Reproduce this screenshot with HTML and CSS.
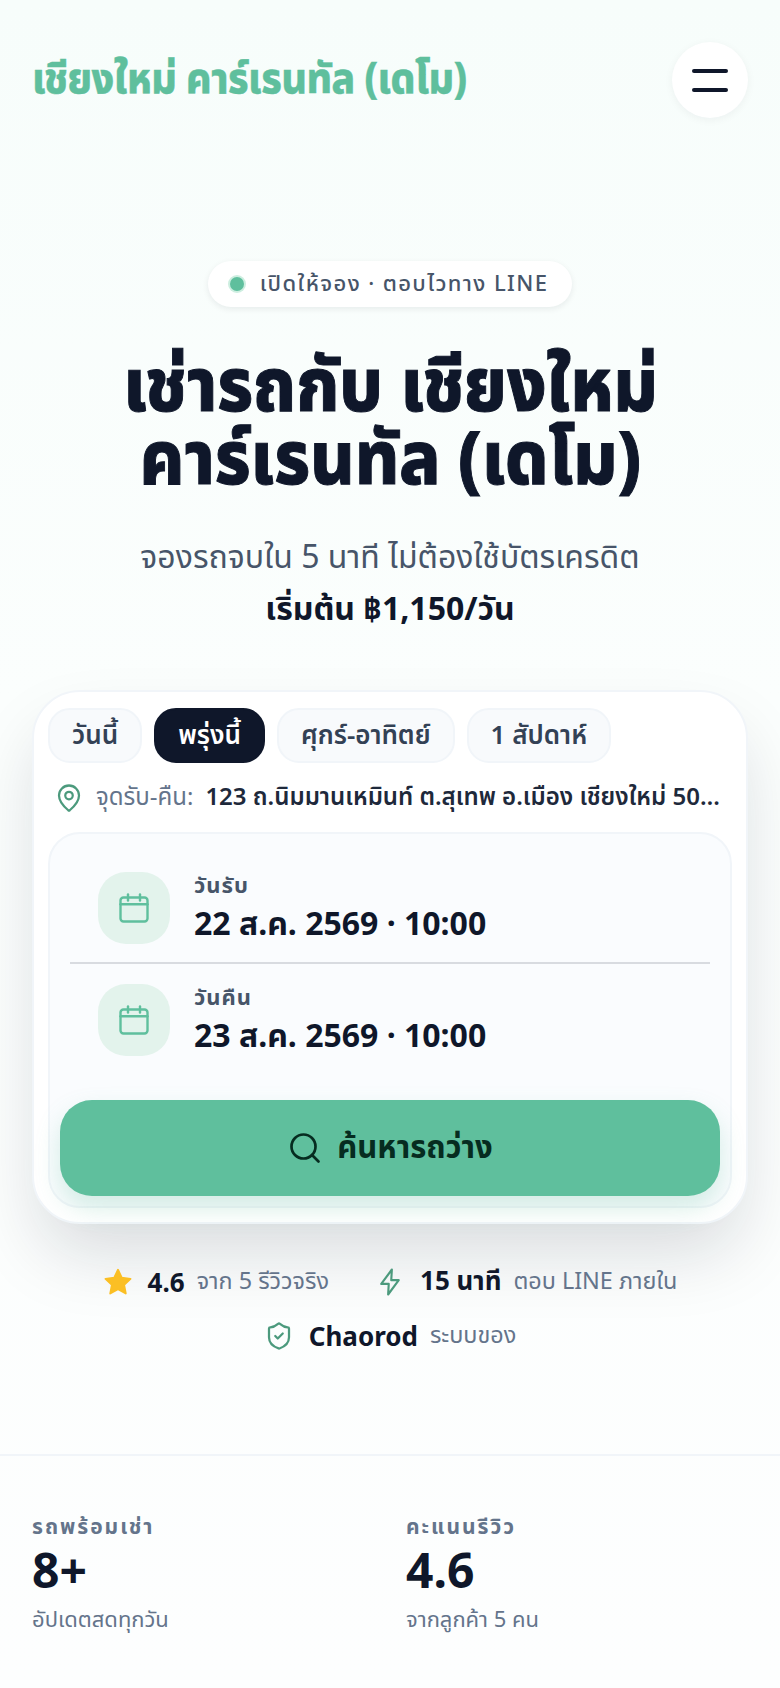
FILE: index.html
```html
<!DOCTYPE html>
<html lang="th">
<head>
<meta charset="utf-8">
<title>เชียงใหม่ คาร์เรนทัล (เดโม)</title>
<link rel="stylesheet" href="styles.css">
</head>
<body>
<header class="topbar">
  <a class="brand">เชียงใหม่ คาร์เรนทัล (เดโม)</a>
  <button class="menu-btn" aria-label="เมนู">
    <span class="menu-line"></span>
    <span class="menu-line"></span>
  </button>
</header>

<main>
  <section class="hero">
    <div class="badge"><span class="badge-dot"></span>เปิดให้จอง · ตอบไวทาง LINE</div>
    <h1 class="hero-title">เช่ารถกับ เชียงใหม่<br>คาร์เรนทัล (เดโม)</h1>
    <p class="hero-sub">จองรถจบใน 5 นาที ไม่ต้องใช้บัตรเครดิต</p>
    <p class="hero-price">เริ่มต้น ฿1,150/วัน</p>
  </section>

  <section class="booking">
    <div class="chips">
      <button class="chip">วันนี้</button>
      <button class="chip chip-active">พรุ่งนี้</button>
      <button class="chip">ศุกร์-อาทิตย์</button>
      <button class="chip">1 สัปดาห์</button>
    </div>
    <div class="place">
      <svg class="place-icon" viewBox="0 0 24 24" fill="none" stroke="currentColor" stroke-width="1.800" stroke-linecap="round" stroke-linejoin="round"><path d="M20 10c0 5-5.500 10.200-7.400 11.800a1 1 0 0 1-1.200 0C9.500 20.200 4 15 4 10a8 8 0 0 1 16 0"/><circle cx="12" cy="10" r="3"/></svg>
      <span class="place-label">จุดรับ-คืน:</span>
      <span class="place-value">123 ถ.นิมมานเหมินท์ ต.สุเทพ อ.เมือง เชียงใหม่ 50200</span>
    </div>
    <div class="panel">
      <div class="date-row date-row-first">
        <span class="date-tile">
          <svg viewBox="0 0 24 24" fill="none" stroke="currentColor" stroke-width="1.600" stroke-linecap="round" stroke-linejoin="round"><path d="M8 3v4"/><path d="M16 3v4"/><rect x="3" y="5" width="18" height="16" rx="2"/><path d="M3 9.500h18"/></svg>
        </span>
        <span class="date-text">
          <span class="date-label">วันรับ</span>
          <span class="date-value">22 ส.ค. 2569 · 10:00</span>
        </span>
      </div>
      <div class="date-row">
        <span class="date-tile">
          <svg viewBox="0 0 24 24" fill="none" stroke="currentColor" stroke-width="1.600" stroke-linecap="round" stroke-linejoin="round"><path d="M8 3v4"/><path d="M16 3v4"/><rect x="3" y="5" width="18" height="16" rx="2"/><path d="M3 9.500h18"/></svg>
        </span>
        <span class="date-text">
          <span class="date-label">วันคืน</span>
          <span class="date-value">23 ส.ค. 2569 · 10:00</span>
        </span>
      </div>
      <button class="search-btn">
        <svg viewBox="0 0 24 24" fill="none" stroke="currentColor" stroke-width="1.800" stroke-linecap="round" stroke-linejoin="round"><path d="m21 21-4.300-4.300"/><circle cx="11" cy="11" r="8"/></svg>
        ค้นหารถว่าง
      </button>
    </div>
  </section>

  <section class="trust">
    <div class="trust-item">
      <svg class="trust-icon star" viewBox="0 0 24 24"><path d="M12 2.200l3 6.400 7 .9-5.100 4.800 1.300 6.900-6.200-3.400-6.200 3.400 1.300-6.900L2 9.500l7-.9z" fill="currentColor" stroke="currentColor" stroke-width="1.500" stroke-linejoin="round"/></svg>
      <b>4.6</b><span>จาก 5 รีวิวจริง</span>
    </div>
    <div class="trust-item">
      <svg class="trust-icon" viewBox="0 0 24 24" fill="none" stroke="currentColor" stroke-width="1.700" stroke-linecap="round" stroke-linejoin="round"><path d="M13.500 2 5 13.500h6L10.500 22 19 10.500h-6z"/></svg>
      <b>15 นาที</b><span>ตอบ LINE ภายใน</span>
    </div>
    <div class="trust-item">
      <svg class="trust-icon" viewBox="0 0 24 24" fill="none" stroke="currentColor" stroke-width="1.800" stroke-linecap="round" stroke-linejoin="round"><path d="M20 13c0 5-3.500 7.500-7.660 8.950a1 1 0 0 1-.670-.010C7.500 20.500 4 18 4 13V6a1 1 0 0 1 1-1c2 0 4.500-1.200 6.240-2.720a1.170 1.170 0 0 1 1.520 0C14.510 3.810 17 5 19 5a1 1 0 0 1 1 1z"/><path d="m9 12 2 2 4-4"/></svg>
      <b>Chaorod</b><span>ระบบของ</span>
    </div>
  </section>

  <section class="stats">
    <div class="stat">
      <div class="stat-label">รถพร้อมเช่า</div>
      <div class="stat-value">8+</div>
      <div class="stat-note">อัปเดตสดทุกวัน</div>
    </div>
    <div class="stat">
      <div class="stat-label">คะแนนรีวิว</div>
      <div class="stat-value">4.6</div>
      <div class="stat-note">จากลูกค้า 5 คน</div>
    </div>
  </section>
</main>
</body>
</html>
```
FILE: styles.css
```css
* { box-sizing: border-box; }

html, body { margin: 0; padding: 0; }

html { background: #fdfefe; }

body {
  min-height: 100vh;
  background: linear-gradient(#f7fdfb, #fbfefd 700px, #fdfefe);
  color: #0f172a;
  font-family: "Noto Sans", "Noto Sans Thai", sans-serif;
  overflow-x: hidden;
}

button { font-family: inherit; border: 0; }

.topbar {
  display: flex;
  align-items: center;
  justify-content: space-between;
  padding: 42px 32px 0;
}

.brand {
  color: #5fbf9d;
  font-size: 42px;
  font-weight: 800;
  line-height: 70px;
  letter-spacing: -.5px;
  margin-bottom: 6px;
  transform: scaleX(.93);
  transform-origin: left center;
  -webkit-text-stroke: .4px #5fbf9d;
}

.menu-btn {
  width: 76px;
  height: 76px;
  border-radius: 50%;
  background: #fff;
  box-shadow: 0 2px 8px rgba(15, 23, 42, .05);
  display: flex;
  flex-direction: column;
  align-items: center;
  justify-content: center;
  gap: 15px;
  padding: 0;
}

.menu-line {
  display: block;
  width: 36px;
  height: 4px;
  border-radius: 2px;
  background: #0f172a;
}

.hero {
  display: flex;
  flex-direction: column;
  align-items: center;
  text-align: center;
  padding: 143px 32px 0;
}

.badge {
  display: flex;
  align-items: center;
  gap: 16px;
  height: 46px;
  padding: 0 24px 0 22px;
  border-radius: 23px;
  background: #fff;
  box-shadow: 0 2px 6px rgba(15, 23, 42, .08);
  color: #475569;
  font-size: 22px;
  font-weight: 500;
  letter-spacing: 1.400px;
}

.badge-dot {
  width: 14px;
  height: 14px;
  border-radius: 50%;
  background: #5fbf9d;
  box-shadow: 0 0 0 2px #cdeee0;
}

.hero-title {
  margin: 39px 0 0;
  font-size: 74px;
  font-weight: 800;
  line-height: 73px;
  white-space: nowrap;
  transform: scaleX(.92);
  -webkit-text-stroke: 1px #0f172a;
}

.hero-sub {
  margin: 42px 0 0;
  color: #475569;
  font-size: 32px;
  line-height: 44px;
}

.hero-price {
  margin: 8px 0 0;
  font-size: 32px;
  font-weight: 700;
  line-height: 44px;
}

.booking {
  margin: 60px 32px 0;
  padding: 16px 14px;
  height: 534px;
  border: 2px solid #f1f5f9;
  border-radius: 48px;
  background: #fff;
  box-shadow: 0 36px 70px -8px rgba(15, 23, 42, .15);
}

.chips {
  display: flex;
  gap: 12px;
}

.chip {
  height: 55px;
  padding: 0 22px;
  border-radius: 22px;
  border: 2px solid #f1f5f9;
  background: #f8fafc;
  color: #334155;
  font-size: 26px;
  font-weight: 600;
}

.chip-active {
  background: #0f172a;
  border-color: #0f172a;
  color: #fff;
}

.place {
  display: flex;
  align-items: center;
  gap: 12px;
  height: 69px;
  padding: 0 10px 0 6px;
  font-size: 24px;
}

.place-icon {
  flex: none;
  width: 30px;
  height: 30px;
  color: #4c9a7d;
}

.place-label {
  flex: none;
  color: #64748b;
}

.place-value {
  flex: 1;
  min-width: 0;
  overflow: hidden;
  white-space: nowrap;
  text-overflow: ellipsis;
  color: #1e293b;
  font-weight: 600;
}

.panel {
  height: 376px;
  padding: 0 10px 10px;
  border: 2px solid #f1f5f9;
  border-radius: 32px;
  background: #fafcfe;
  display: flex;
  flex-direction: column;
}

.date-row {
  display: flex;
  align-items: center;
  gap: 24px;
  height: 112px;
  padding: 0 38px;
}

.date-row-first {
  height: 130px;
  padding-top: 20px;
  border-bottom: 2px solid #d8dbe0;
  margin: 0 10px;
  padding-left: 28px;
}

.date-tile {
  flex: none;
  width: 72px;
  height: 72px;
  border-radius: 28px;
  background: #e3f3ec;
  color: #5fbf9d;
  display: flex;
  align-items: center;
  justify-content: center;
}

.date-tile svg { width: 36px; height: 36px; }

.date-text { display: flex; flex-direction: column; }

.date-label {
  color: #475569;
  font-size: 22px;
  font-weight: 700;
  letter-spacing: 1px;
  line-height: 28px;
  margin-bottom: 2px;
}

.date-value {
  font-size: 32px;
  font-weight: 700;
  line-height: 46px;
}

.search-btn {
  margin-top: auto;
  flex: none;
  height: 96px;
  border-radius: 32px;
  background: #5fbf9d;
  box-shadow: 0 12px 24px rgba(95, 191, 157, .25);
  color: #062c20;
  font-size: 31px;
  font-weight: 700;
  display: flex;
  align-items: center;
  justify-content: center;
  gap: 14px;
}

.search-btn svg { width: 36px; height: 36px; }

.trust {
  display: flex;
  flex-wrap: wrap;
  justify-content: center;
  gap: 14px 46px;
  padding: 38px 32px 0;
}

.trust-item {
  display: flex;
  align-items: center;
  height: 40px;
  color: #64748b;
  font-size: 23.400px;
}

.trust-item b {
  margin: 0 12px 0 15px;
  color: #0f172a;
  font-size: 26px;
  font-weight: 700;
}

.trust-icon { width: 30px; height: 30px; color: #4c9a7d; }

.trust-icon.star { color: #fbbf24; }

.stats {
  margin-top: 98px;
  padding: 56px 32px 40px;
  border-top: 2px solid #f1f5f9;
  display: grid;
  grid-template-columns: 1fr 1fr;
  gap: 32px;
}

.stat-label {
  color: #64748b;
  font-size: 21px;
  font-weight: 700;
  letter-spacing: 2px;
  line-height: 28px;
}

.stat-value {
  font-size: 48px;
  font-weight: 700;
  line-height: 60px;
}

.stat-note {
  color: #64748b;
  font-size: 22px;
  line-height: 36px;
}
```
